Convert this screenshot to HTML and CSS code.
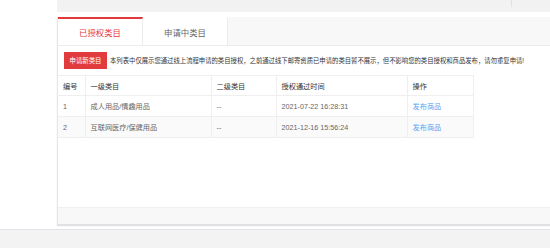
FILE: index.html
```html
<!DOCTYPE html>
<html lang="zh-CN">
<head>
<meta charset="utf-8">
<link rel="stylesheet" href="styles.css">
</head>
<body>
<div class="wrap">
  <div class="main">
    <div class="topbar"><div class="topbar-sep"></div></div>
    <div class="panel">
      <div class="tabs">
        <div class="tab active">已授权类目</div>
        <div class="tab">申请中类目</div>
      </div>
      <div class="content">
        <div class="toolbar">
          <button class="btn">申请新类目</button>
          <span class="notice">本列表中仅展示您通过线上流程申请的类目授权，之前通过线下邮寄资质已申请的类目暂不展示，但不影响您的类目授权和商品发布，请勿重复申请!</span>
        </div>
        <table class="grid">
          <colgroup>
            <col class="c1"><col class="c2"><col class="c3"><col class="c4"><col class="c5">
          </colgroup>
          <thead>
            <tr><th>编号</th><th>一级类目</th><th>二级类目</th><th>授权通过时间</th><th>操作</th></tr>
          </thead>
          <tbody>
            <tr><td>1</td><td>成人用品/情趣用品</td><td>--</td><td>2021-07-22 16:28:31</td><td><a class="link">发布商品</a></td></tr>
            <tr class="alt"><td>2</td><td>互联网医疗/保健用品</td><td>--</td><td>2021-12-16 15:56:24</td><td><a class="link">发布商品</a></td></tr>
          </tbody>
        </table>
      </div>
      <div class="panel-foot"></div>
    </div>
  </div>
</div>
<div class="footer"></div>
</body>
</html>
```

FILE: styles.css
```css
html, body {
  margin: 0;
  padding: 0;
  background: #fff;
  font-family: "Liberation Sans", "Noto Sans CJK SC", sans-serif;
  width: 550px;
  height: 248px;
  overflow: hidden;
}
.wrap {
  height: 229px;
  overflow: hidden;
}
.main {
  margin-left: 57px;
}
.topbar {
  height: 12px;
  background: #f2f2f2;
  position: relative;
}
.topbar-sep {
  position: absolute;
  left: 454px;
  top: 0;
  width: 1px;
  height: 7px;
  background: #e2e2e2;
}
.panel {
  margin-top: 5px;
  border-left: 1px solid #e6e6e6;
  box-shadow: 0 2px 1px rgba(0,0,0,0.12);
  display: flex;
  flex-direction: column;
}
.tabs {
  display: flex;
  height: 28px;
  background: #f8f8f8;
  border-bottom: 1px solid #ececec;
}
.tab {
  width: 85px;
  box-sizing: border-box;
  background: #fff;
  border-right: 1px solid #ececec;
  border-top: 2px solid transparent;
  font-size: 8.4px;
  color: #666;
  display: flex;
  align-items: center;
  justify-content: center;
}
.tab.active {
  border-top-color: #e4393c;
  color: #e4393c;
}
.content {
  height: 161px;
  box-sizing: border-box;
  padding-top: 6px;
  background: #fff;
}
.toolbar {
  display: flex;
  align-items: center;
  padding-left: 6px;
  height: 17px;
}
.btn {
  width: 43px;
  height: 17px;
  border: 0;
  padding: 0;
  margin: 0 3px 0 0;
  background: #e23b3d;
  color: #fff;
  font-family: inherit;
  font-size: 6.4px;
}
.notice {
  font-size: 6.35px;
  color: #333;
  white-space: nowrap;
}
.grid {
  margin-top: 6px;
  width: 415px;
  border-collapse: collapse;
  table-layout: fixed;
  font-size: 7.2px;
}
.c1 { width: 27px; }
.c2 { width: 126px; }
.c3 { width: 65px; }
.c4 { width: 131px; }
.c5 { width: 66px; }
.grid th, .grid td {
  border: 1px solid #efefef;
  height: 19px;
  padding: 0 0 0 5px;
  text-align: left;
  font-weight: normal;
  white-space: nowrap;
}
.grid th {
  color: #333;
}
.grid td {
  height: 20px;
  color: #666;
}
.grid tr.alt td {
  background: #fafafa;
}
.grid th:first-child, .grid td:first-child {
  border-left: 0;
}
.link {
  color: #5f9ff0;
}
.panel-foot {
  height: 16px;
  background: #f8f8f8;
  border-top: 1px solid #efefef;
}
.footer {
  height: 18px;
  background: #f3f3f3;
  border-top: 1px solid #dfe3ea;
}
```
